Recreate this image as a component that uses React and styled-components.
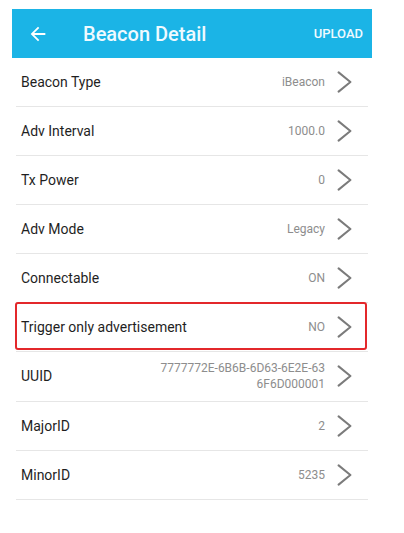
import React from 'react'
import styled, { createGlobalStyle } from 'styled-components'

const GlobalStyle = createGlobalStyle`
  html, body {
    margin: 0;
    padding: 0;
    background: #ffffff;
  }
  body {
    font-family: Roboto, "Liberation Sans", Arial, sans-serif;
    -webkit-font-smoothing: antialiased;
  }
`

const FIELDS = [
  { label: 'Beacon Type', value: 'iBeacon' },
  { label: 'Adv Interval', value: '1000.0' },
  { label: 'Tx Power', value: '0' },
  { label: 'Adv Mode', value: 'Legacy' },
  { label: 'Connectable', value: 'ON' },
  { label: 'Trigger only advertisement', value: 'NO', highlighted: true },
  { label: 'UUID', value: '7777772E-6B6B-6D63-6E2E-636F6D000001' },
  { label: 'MajorID', value: '2' },
  { label: 'MinorID', value: '5235' },
]

const BackIcon = () => (
  <svg width="22" height="22" viewBox="0 0 24 24" fill="#ffffff">
    <path d="M20 11H7.83l5.59-5.59L12 4l-8 8 8 8 1.41-1.41L7.83 13H20v-2z" />
  </svg>
)

const Chevron = () => (
  <ChevronIcon width="15" height="22" viewBox="0 0 15 22">
    <polyline
      points="1.6,1.4 13.4,11 1.6,20.6"
      fill="none"
      stroke="#7b7b7b"
      strokeWidth="2"
      strokeLinecap="round"
      strokeLinejoin="round"
    />
  </ChevronIcon>
)

const App = () => (
  <>
    <GlobalStyle />
    <Screen>
      <AppBar>
        <BackButton>
          <BackIcon />
        </BackButton>
        <Title>Beacon Detail</Title>
        <Action>UPLOAD</Action>
      </AppBar>
      <List>
        {FIELDS.map(field => (
          <Row key={field.label} highlighted={field.highlighted}>
            <Label>{field.label}</Label>
            <Value>{field.value}</Value>
            <Chevron />
          </Row>
        ))}
      </List>
    </Screen>
  </>
)

const Screen = styled.div`
  width: 360px;
  margin: 9px 0 0 12px;
  background: #ffffff;
`

const AppBar = styled.header`
  display: flex;
  align-items: center;
  height: 49px;
  padding: 0 9px 0 15px;
  background: #1bb4e6;
  color: #ffffff;
`

const BackButton = styled.div`
  display: flex;
  align-items: center;
  width: 22px;
  height: 22px;
  margin-right: 34px;
`

const Title = styled.h1`
  flex: 1;
  margin: 0;
  font-size: 20px;
  font-weight: 500;
  color: #effaff;
  letter-spacing: 0;
`

const Action = styled.span`
  font-size: 13px;
  font-weight: 500;
  color: #effaff;
`

const List = styled.div`
  display: flex;
  flex-direction: column;
  margin: 0 4px;
`

const Row = styled.div`
  position: relative;
  display: flex;
  align-items: center;
  box-sizing: border-box;
  min-height: 49px;
  padding: 8px 16px 9px 5px;
  border-bottom: 1px solid #e6e6e6;

  ${({ highlighted }) =>
    highlighted &&
    `
    &::after {
      content: '';
      position: absolute;
      left: -1px;
      right: 1px;
      top: -1px;
      bottom: 1px;
      border: 2px solid #e3282b;
      border-radius: 3px;
      pointer-events: none;
    }
  `}
`

const Label = styled.span`
  flex: 1;
  font-size: 14px;
  color: #1f1f1f;
`

const Value = styled.span`
  max-width: 165px;
  margin-right: 12px;
  font-size: 12px;
  line-height: 16px;
  color: #8d8d8d;
  text-align: right;
  word-break: break-all;
`

const ChevronIcon = styled.svg`
  flex-shrink: 0;
  display: block;
`

export default App
